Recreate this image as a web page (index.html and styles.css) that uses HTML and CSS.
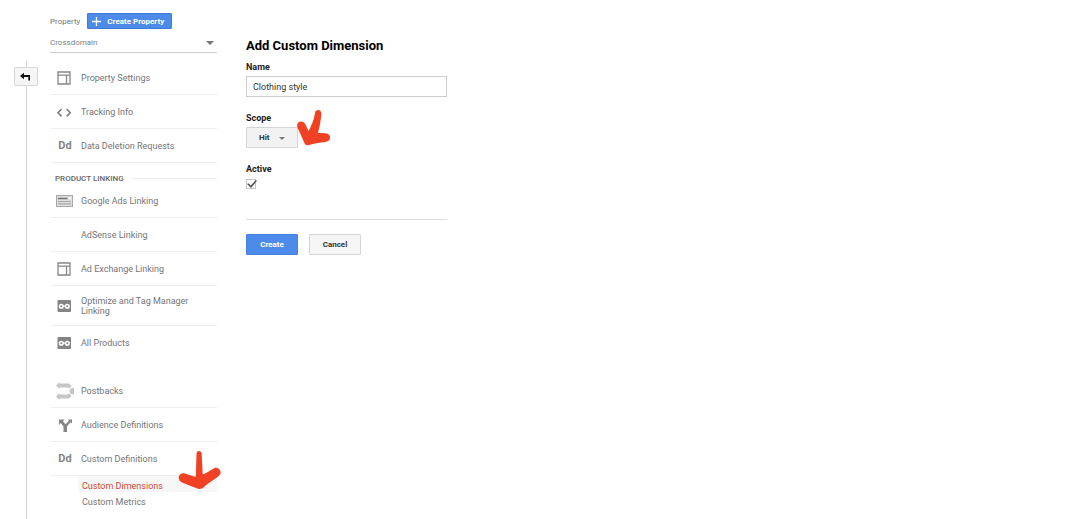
FILE: index.html
```html
<!DOCTYPE html>
<html lang="en">
<head>
    <meta charset="UTF-8">
    <meta name="viewport" content="width=device-width, initial-scale=1.0">
    <title>Add Custom Dimension</title>
    <link rel="stylesheet" href="styles.css">
</head>
<body>
    <!-- Icons used more than once -->
    <svg class="sprite" aria-hidden="true">
        <symbol id="icon-layout" viewBox="0 0 18 16">
            <path d="M2 2h12v12H2zM2 5.200h12M10.500 5.200V14" fill="none" stroke="#878787" stroke-width="1.300"/>
        </symbol>
        <symbol id="icon-link" viewBox="0 0 18 16">
            <rect x="1.500" y="2" width="13.500" height="12" rx="1" fill="#848484"/>
            <g fill="none" stroke="#fff" stroke-width="1.500">
                <circle cx="5.300" cy="8.200" r="1.800"/>
                <circle cx="11.300" cy="8.200" r="1.800"/>
                <path d="M7 8.200h2.500" stroke-width="1.200"/>
            </g>
        </symbol>
    </svg>

    <div class="page">
        <div class="rail">
            <button class="back-button" type="button" aria-label="Back">
                <svg width="12" height="10" viewBox="0 0 12 10">
                    <path d="M0 4L4 0.700V3h6v5.500H8.300V5H4v2.300z" fill="#111"/>
                </svg>
            </button>
        </div>

        <aside class="sidebar">
            <div class="property-header">
                <span class="property-label" id="property-label">Property</span>
                <button class="create-property" type="button">
                    <svg width="9" height="9" viewBox="0 0 9 9">
                        <path d="M4.500 0v9M0 4.500h9" stroke="#fff" stroke-width="1.300"/>
                    </svg>
                    Create Property
                </button>
            </div>
            <div class="property-select">
                <select aria-labelledby="property-label">
                    <option>Crossdomain</option>
                </select>
            </div>

            <nav class="menu">
                <a class="menu-item" href="#">
                    <svg class="icon"><use href="#icon-layout"/></svg>
                    <span>Property Settings</span>
                </a>
                <a class="menu-item" href="#">
                    <svg class="icon" viewBox="0 0 18 16">
                        <path d="M5.500 5L2 8.700l3.500 3.700M10.700 5l3.500 3.700-3.500 3.700" fill="none" stroke="#7d7d7d" stroke-width="1.600"/>
                    </svg>
                    <span>Tracking Info</span>
                </a>
                <a class="menu-item" href="#">
                    <span class="icon icon-text">Dd</span>
                    <span>Data Deletion Requests</span>
                </a>

                <h2 class="menu-heading">PRODUCT LINKING</h2>
                <a class="menu-item" href="#">
                    <svg class="icon" viewBox="0 0 18 16">
                        <rect x="0.500" y="2.500" width="16" height="11" fill="#dedede" stroke="#a8a8a8"/>
                        <path d="M2 5.500h9.500" stroke="#777" stroke-width="1.600"/>
                        <path d="M12.500 5.500h2.500" stroke="#fff" stroke-width="1.600"/>
                        <path d="M2 8.500h13M2 10.800h13" stroke="#aaa" stroke-width="1.200"/>
                    </svg>
                    <span>Google Ads Linking</span>
                </a>
                <a class="menu-item" href="#">
                    <span class="icon"></span>
                    <span>AdSense Linking</span>
                </a>
                <a class="menu-item" href="#">
                    <svg class="icon"><use href="#icon-layout"/></svg>
                    <span>Ad Exchange Linking</span>
                </a>
                <a class="menu-item menu-item-tall" href="#">
                    <svg class="icon"><use href="#icon-link"/></svg>
                    <span>Optimize and Tag Manager<br>Linking</span>
                </a>
                <a class="menu-item menu-item-last" href="#">
                    <svg class="icon"><use href="#icon-link"/></svg>
                    <span>All Products</span>
                </a>

                <a class="menu-item" href="#">
                    <svg class="icon icon-postbacks" viewBox="0 0 18 18">
                        <path d="M0 3.500L3.500 0v1.500H13l2.500 2.500-2 2.500L11.500 5.500h-8V7z" fill="#c6c6c6"/>
                        <path d="M0 14.500L3.500 11v1.500h8l2-1 2 2.500-2.500 2.500H3.500V18z" fill="#c6c6c6"/>
                        <path d="M18 5.800v6.700c-2.500 0-4.500-1-4.500-3.300S15.500 5.800 18 5.800z" fill="#c6c6c6"/>
                    </svg>
                    <span>Postbacks</span>
                </a>
                <a class="menu-item" href="#">
                    <svg class="icon" viewBox="0 0 18 16">
                        <path d="M3 2.500h5.500L7 4.200l2.500 3L13 3.800 12 2.500h4v4l-1.300-1.200-3.700 4V15H7.500V9.500L4.700 6 3 8z" fill="#858585"/>
                    </svg>
                    <span>Audience Definitions</span>
                </a>
                <a class="menu-item" href="#">
                    <span class="icon icon-text">Dd</span>
                    <span>Custom Definitions</span>
                </a>
                <div class="submenu">
                    <a class="submenu-item active" href="#">Custom Dimensions</a>
                    <a class="submenu-item" href="#">Custom Metrics</a>
                    <svg class="marker marker-menu" viewBox="0 0 44 40" aria-hidden="true">
                        <path d="M21 1c1.500 0 2.600 1 2.700 3l1 20.500c4-1.500 8-4.500 11.500-6.300 4-1.800 8 3 5.800 6.300-2.500 3.500-10 7-16 12.500-2.500 2.300-5 2.300-8 1L4 32.500C-1.500 30 .5 22.500 6 23.200c4.500 1.300 8 2.800 11.800 3.600L18.500 4c.1-2 1-3 2.500-3z" fill="#f04124"/>
                    </svg>
                </div>
            </nav>
        </aside>

        <main class="content">
            <h1>Add Custom Dimension</h1>
            <form class="dimension-form">
                <label for="name">Name</label>
                <input class="text-input" id="name" type="text" value="Clothing style">

                <label for="scope">Scope</label>
                <div class="scope-select">
                    <select id="scope">
                        <option>Hit</option>
                    </select>
                    <svg class="marker marker-scope" viewBox="0 0 36 38" aria-hidden="true">
                        <path d="M22 1c2.300 0 3.500 1.800 3.300 4.500-.5 6-1.500 12-3.300 18.500l7.500.3c6.500.7 6 8-.5 8.700-5.500.8-11 1.500-16 3-2.500.8-4 0-4.800-2.500L1.500 18.500C-.5 12 7 10.500 9.500 15.500l3 6.500C15.500 16.500 18 11 19 4c.3-2 1.400-3 3-3z" fill="#f04124"/>
                    </svg>
                </div>

                <label for="active">Active</label>
                <input class="checkbox" id="active" type="checkbox" checked>

                <div class="form-actions">
                    <button class="button button-primary" type="button">Create</button>
                    <button class="button" type="button">Cancel</button>
                </div>
            </form>
        </main>
    </div>
</body>
</html>
```
FILE: styles.css
```css
* {
    margin: 0;
    padding: 0;
    box-sizing: border-box;
}

body {
    background: #fff;
    color: #222;
    font-family: Roboto, "Liberation Sans", sans-serif;
    font-size: 9px;
}

button,
input,
select {
    font-family: inherit;
}

.sprite {
    display: none;
}

.page {
    display: flex;
    min-height: 100vh;
}

/* Left rail */
.rail {
    display: flex;
    flex-direction: column;
    align-items: center;
    width: 50px;
    padding-top: 61px;
    padding-right: 12px;
    padding-left: 14px;
}

.rail::before {
    content: "";
    width: 1px;
    height: 6px;
    background: #d4d4d4;
}

.rail::after {
    content: "";
    flex: 1;
    width: 1px;
    background: #d4d4d4;
}

.back-button {
    display: flex;
    justify-content: center;
    align-items: center;
    width: 24px;
    height: 19px;
    background: #f5f5f5;
    border: 1px solid #d8d8d8;
    border-radius: 1px;
}

/* Sidebar */
.sidebar {
    width: 167px;
    padding-top: 13px;
}

.property-header {
    display: flex;
    align-items: center;
    gap: 7px;
    color: #757575;
    font-size: 8px;
}

.create-property {
    display: flex;
    align-items: center;
    gap: 6px;
    height: 16px;
    padding: 0 7px 0 4px;
    background: #4d8bea;
    border: 1px solid #4179d6;
    border-radius: 1px;
    color: #fff;
    font-size: 8px;
    font-weight: 700;
}

.property-select {
    position: relative;
    border-bottom: 1px solid #ccc;
}

.property-select select {
    display: block;
    width: 100%;
    height: 23px;
    padding-top: 4px;
    appearance: none;
    background: none;
    border: none;
    color: #808080;
    font-size: 8px;
}

.property-select::after {
    content: "";
    position: absolute;
    top: 12px;
    right: 3px;
    border: 4px solid transparent;
    border-top-color: #757575;
    border-bottom: none;
    pointer-events: none;
}

.menu {
    padding-top: 8px;
    padding-left: 1px;
}

.menu-item {
    display: flex;
    align-items: center;
    gap: 7px;
    height: 34px;
    padding-left: 5px;
    border-bottom: 1px solid #eee;
    color: #757575;
    line-height: 10px;
    text-decoration: none;
}

.menu-item-tall {
    height: 40px;
}

.menu-item-last {
    margin-bottom: 14px;
    border-bottom: none;
}

.icon {
    flex: none;
    width: 18px;
    height: 16px;
}

.icon-postbacks {
    height: 18px;
}

.icon-text {
    color: #858585;
    font-size: 11px;
    font-weight: 700;
    line-height: 16px;
    text-align: center;
}

.menu-heading {
    display: flex;
    align-items: center;
    gap: 8px;
    height: 21px;
    padding-top: 10px;
    padding-left: 4px;
    color: #666;
    font-size: 8px;
    font-weight: 500;
}

.menu-heading::after {
    content: "";
    flex: 1;
    height: 1px;
    background: #eee;
}

.submenu {
    position: relative;
    padding-left: 27px;
}

.submenu-item {
    display: block;
    padding: 4px 4px 0;
    color: #757575;
    line-height: 12px;
    text-decoration: none;
}

.submenu-item.active {
    background: #f7f7f7;
    color: #d14836;
}

/* Red arrows lie over the interface */
.marker {
    position: absolute;
    pointer-events: none;
}

.marker-menu {
    top: -26px;
    right: -5px;
    width: 44px;
    height: 40px;
}

.marker-scope {
    top: -18px;
    left: 50px;
    width: 36px;
    height: 38px;
}

/* Form */
.content {
    flex: 1;
    padding-top: 38px;
    padding-left: 29px;
}

h1 {
    color: #000;
    font-size: 13px;
    font-weight: 700;
    line-height: 16px;
}

.dimension-form {
    max-width: 201px;
    padding-top: 7px;
}

.dimension-form label {
    display: block;
    margin-bottom: 3px;
    font-weight: 700;
    line-height: 12px;
}

.text-input {
    display: block;
    width: 100%;
    height: 21px;
    margin-bottom: 15px;
    padding: 0 6px;
    border: 1px solid #ccc;
    color: #333;
    font-size: 9px;
}

.scope-select {
    position: relative;
    width: 52px;
    margin-bottom: 15px;
}

.scope-select select {
    display: block;
    width: 100%;
    height: 21px;
    padding-left: 12px;
    appearance: none;
    background: #f2f2f2;
    border: 1px solid #d5d5d5;
    border-radius: 1px;
    color: #333;
    font-size: 8px;
    font-weight: 700;
}

.scope-select::after {
    content: "";
    position: absolute;
    top: 10px;
    right: 13px;
    border: 3px solid transparent;
    border-top-color: #777;
    border-bottom: none;
    pointer-events: none;
}

.checkbox {
    display: block;
    width: 10px;
    height: 10px;
    margin-top: 4px;
    appearance: none;
    border: 1px solid #c6c6c6;
}

.checkbox:checked::before {
    content: "";
    display: block;
    width: 10px;
    height: 8px;
    background: #555;
    clip-path: polygon(0 50%, 15% 40%, 38% 68%, 88% 0, 100% 10%, 40% 100%);
}

.form-actions {
    display: flex;
    gap: 11px;
    margin-top: 30px;
    padding-top: 14px;
    border-top: 1px solid #ddd;
}

.button {
    width: 52px;
    height: 21px;
    background: #f5f5f5;
    border: 1px solid #d5d5d5;
    border-radius: 1px;
    color: #333;
    font-size: 8px;
    font-weight: 700;
}

.button-primary {
    background: #4d8bea;
    border-color: #4380e0;
    color: #fff;
}
```
